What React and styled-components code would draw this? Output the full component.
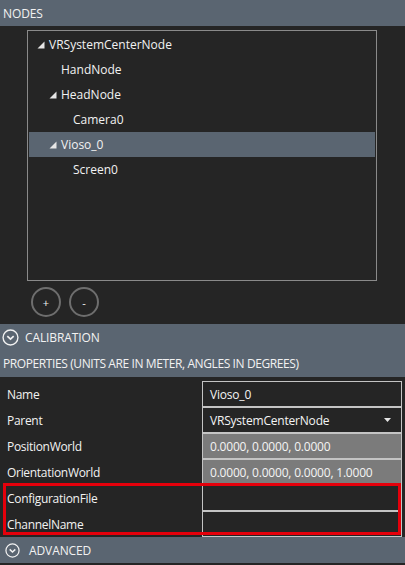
import styled, { createGlobalStyle } from "styled-components";

const GlobalStyle = createGlobalStyle`
  html, body {
    margin: 0;
    padding: 0;
    background: #252525;
  }
  body {
    font-family: "Open Sans", "Noto Sans", "Liberation Sans", sans-serif;
    font-size: 12px;
    color: #f2f2f2;
  }
`;

const Page = styled.div`
  width: 405px;
  height: 565px;
  display: flex;
  flex-direction: column;
  background: #252525;
  overflow: hidden;
  user-select: none;
`;

const Band = styled.div`
  background: #5a6571;
  display: flex;
  flex-direction: column;
  margin-top: ${(p) => p.$top || 0}px;
`;

const BandRow = styled.div`
  height: ${(p) => p.$h || 26}px;
  display: flex;
  align-items: center;
  gap: ${(p) => p.$gap || 0}px;
  padding-left: ${(p) => p.$pad || 3}px;
  letter-spacing: ${(p) => p.$ls || -0.1}px;
`;

const Tree = styled.div`
  margin: 4px 0 0 27px;
  width: 350px;
  height: 251px;
  box-sizing: border-box;
  border: 1px solid #8a8a8a;
  padding: 1px;
`;

const TreeRow = styled.div`
  height: 25px;
  display: flex;
  align-items: center;
  padding-left: ${(p) => 8 + p.$level * 12}px;
  background: ${(p) => (p.$selected ? "#5a6571" : "transparent")};
`;

const Expander = styled.span`
  width: 12px;
  display: inline-flex;
  align-items: center;
`;

const Buttons = styled.div`
  display: flex;
  gap: 8px;
  margin: 6px 0 0 31px;
`;

const RoundButton = styled.button`
  width: 30px;
  height: 30px;
  border-radius: 50%;
  border: 2px solid #6e6e6e;
  background: transparent;
  color: #f2f2f2;
  font: inherit;
  font-size: 11px;
  padding: 0;
  display: flex;
  align-items: center;
  justify-content: center;
`;

const Props = styled.div`
  display: flex;
  flex-direction: column;
  margin-top: 4px;
`;

const Highlight = styled.div`
  position: relative;
  display: flex;
  flex-direction: column;

  &::after {
    content: "";
    position: absolute;
    left: 3px;
    right: 4px;
    top: -2px;
    bottom: 2px;
    border: 3px solid #e5000b;
    pointer-events: none;
  }
`;

const PropRow = styled.div`
  height: 26px;
  display: flex;
  align-items: center;
`;

const Label = styled.div`
  flex: 1;
  padding-left: 7px;
  letter-spacing: -0.3px;
`;

const Value = styled.div`
  width: 200px;
  height: 26px;
  margin-right: 3px;
  box-sizing: border-box;
  border: 1px solid #c4c4c4;
  background: ${(p) => (p.$disabled ? "#7b7b7b" : "#252525")};
  display: flex;
  align-items: center;
  justify-content: space-between;
  padding: 0 10px 0 7px;
  color: #f4f4f4;
  letter-spacing: -0.2px;
`;

const ChevronCircle = ({ size = 16 }) => (
  <svg width={size} height={size} viewBox="0 0 16 16">
    <circle cx="8" cy="8" r="7" fill="none" stroke="#f2f2f2" strokeWidth="1.3" />
    <path d="M5 6.8 L8 9.6 L11 6.8" fill="none" stroke="#f2f2f2" strokeWidth="1.6" />
  </svg>
);

const Triangle = () => (
  <svg width="8" height="8" viewBox="0 0 8 8">
    <polygon points="7.5,0.5 7.5,7.5 0.5,7.5" fill="#e6e6e6" />
  </svg>
);

const DropArrow = () => (
  <svg width="7" height="5" viewBox="0 0 7 5">
    <polygon points="0,0 7,0 3.5,4" fill="#e6e6e6" />
  </svg>
);

const nodes = [
  { name: "VRSystemCenterNode", level: 0, open: true },
  { name: "HandNode", level: 1 },
  { name: "HeadNode", level: 1, open: true },
  { name: "Camera0", level: 2 },
  { name: "Vioso_0", level: 1, open: true, selected: true },
  { name: "Screen0", level: 2 },
];

const props = [
  { label: "Name", value: "Vioso_0" },
  { label: "Parent", value: "VRSystemCenterNode", combo: true },
  { label: "PositionWorld", value: "0.0000, 0.0000, 0.0000", disabled: true },
  { label: "OrientationWorld", value: "0.0000, 0.0000, 0.0000, 1.0000", disabled: true },
];

const extra = ["ConfigurationFile", "ChannelName"];

export default function App() {
  return (
    <Page>
      <GlobalStyle />
      <Band>
        <BandRow $h={26}>NODES</BandRow>
      </Band>

      <Tree>
        {nodes.map((n) => (
          <TreeRow key={n.name} $level={n.open ? n.level : n.level + 1} $selected={n.selected}>
            {n.open && (
              <Expander>
                <Triangle />
              </Expander>
            )}
            {n.name}
          </TreeRow>
        ))}
      </Tree>

      <Buttons>
        <RoundButton>+</RoundButton>
        <RoundButton>-</RoundButton>
      </Buttons>

      <Band $top={7}>
        <BandRow $h={26} $pad={2} $gap={6}>
          <ChevronCircle size={17} />
          CALIBRATION
        </BandRow>
        <BandRow $h={27} $ls={-0.4}>PROPERTIES (UNITS ARE IN METER, ANGLES IN DEGREES)</BandRow>
      </Band>

      <Props>
        {props.map((p) => (
          <PropRow key={p.label}>
            <Label>{p.label}</Label>
            <Value $disabled={p.disabled}>
              {p.value}
              {p.combo && <DropArrow />}
            </Value>
          </PropRow>
        ))}
        <Highlight>
          {extra.map((l) => (
            <PropRow key={l}>
              <Label>{l}</Label>
              <Value />
            </PropRow>
          ))}
        </Highlight>
      </Props>

      <Band>
        <BandRow $h={26} $pad={5} $gap={9}>
          <ChevronCircle size={15} />
          ADVANCED
        </BandRow>
      </Band>
    </Page>
  );
}
